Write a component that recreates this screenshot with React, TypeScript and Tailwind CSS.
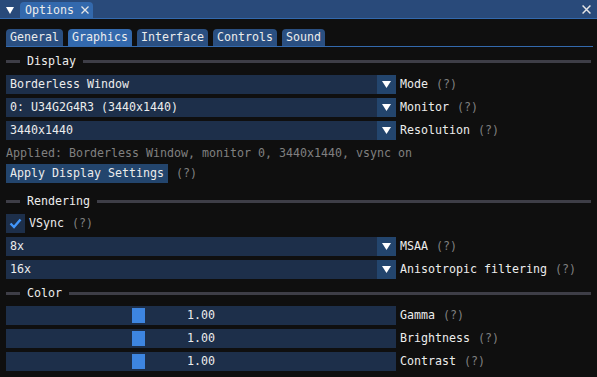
import React from 'react'

const mono = { fontFamily: '"DejaVu Sans Mono", "Liberation Mono", monospace' }

function Help() {
  return <span className="ml-[8px] text-[#808080]">(?)</span>
}

function DownTri({ w = 9, h = 7 }: { w?: number; h?: number }) {
  return (
    <svg width={w} height={h} viewBox={`0 0 ${w} ${h}`}>
      <polygon points={`0,0 ${w},0 ${w / 2},${h}`} fill="#ffffff" />
    </svg>
  )
}

function Cross({ size = 8 }: { size?: number }) {
  return (
    <svg width={size} height={size} viewBox="0 0 8 8">
      <path d="M0.5 0.5 L7.5 7.5 M7.5 0.5 L0.5 7.5" stroke="#e6e6e6" strokeWidth="1.3" />
    </svg>
  )
}

function SeparatorText({ label }: { label: string }) {
  return (
    <div className="flex h-[13px] items-center">
      <div className="h-[3px] w-[14px] bg-[#3e3e47]" />
      <span className="px-[7px] leading-[13px]">{label}</span>
      <div className="h-[3px] flex-1 bg-[#3e3e47]" />
    </div>
  )
}

function Combo({ value, label, className = '' }: { value: string; label: string; className?: string }) {
  return (
    <div className={`flex h-[19px] items-center ${className}`}>
      <div className="flex h-full w-[390px]">
        <div className="flex flex-1 items-center bg-[#1d2f4a] pl-[4px]">{value}</div>
        <div className="flex w-[19px] items-center justify-center bg-[#23456d]">
          <DownTri />
        </div>
      </div>
      <span className="ml-[4px]">{label}</span>
      <Help />
    </div>
  )
}

function Slider({ label, className = '' }: { label: string; className?: string }) {
  return (
    <div className={`flex h-[19px] items-center ${className}`}>
      <div className="flex h-full w-[390px] items-center bg-[#1d2f4a]">
        <div className="ml-[126px] h-[15px] w-[13px] bg-[#3d85e0]" />
        <span className="ml-[42px]">1.00</span>
      </div>
      <span className="ml-[4px]">{label}</span>
      <Help />
    </div>
  )
}

export default function App() {
  const tabs = ['General', 'Graphics', 'Interface', 'Controls', 'Sound']

  return (
    <div
      className="flex h-[377px] w-[597px] flex-col overflow-hidden bg-[#0f0f0f] text-[11.63px] leading-[13px] text-[#ececec]"
      style={mono}
    >
      {/* Title / dock tab bar */}
      <div className="flex h-[19px] shrink-0 items-end border-b border-[#3369ad] bg-[#294a7a]">
        <div className="mb-[3px] ml-[5px] flex h-[10px] w-[10px] items-center justify-center">
          <DownTri w={8} h={7} />
        </div>
        <div className="ml-[5px] flex h-[16px] w-[73px] items-center rounded-t-[4px] bg-[#3369ad] pl-[5px]">
          <span>Options</span>
          <span className="ml-[7px] flex items-center">
            <Cross />
          </span>
        </div>
        <div className="mb-[4px] ml-auto mr-[6px] flex items-center">
          <Cross size={9} />
        </div>
      </div>

      <div className="flex flex-col px-[6px]">
        {/* Tab bar */}
        <div className="mt-[10px] -mr-[2px] flex gap-[5px] border-b border-[#3369ad]">
          {tabs.map((t) => (
            <div
              key={t}
              className={`flex h-[17px] items-center rounded-t-[4px] px-[4px] ${
                t === 'Graphics' ? 'bg-[#3369ad]' : 'bg-[#2a4f81]'
              }`}
            >
              {t}
            </div>
          ))}
        </div>

        <div className="mt-[8px]">
          <SeparatorText label="Display" />
        </div>
        <Combo className="mt-[7px]" value="Borderless Window" label="Mode" />
        <Combo className="mt-[4px]" value="0: U34G2G4R3 (3440x1440)" label="Monitor" />
        <Combo className="mt-[4px]" value="3440x1440" label="Resolution" />

        <div className="mt-[7px] h-[13px] text-[#808080]">
          Applied: Borderless Window, monitor 0, 3440x1440, vsync on
        </div>

        <div className="mt-[4px] flex h-[19px] items-center">
          <div className="flex h-full items-center bg-[#23456d] px-[4px]">Apply Display Settings</div>
          <Help />
        </div>

        <div className="mt-[12px]">
          <SeparatorText label="Rendering" />
        </div>
        <div className="mt-[6px] flex h-[19px] items-center">
          <div className="flex h-[19px] w-[19px] items-center justify-center bg-[#1d2f4a]">
            <svg width="13" height="11" viewBox="0 0 13 11">
              <path d="M1.5 5.5 L5 9 L11.5 1.5" stroke="#4296fa" strokeWidth="2.4" fill="none" />
            </svg>
          </div>
          <span className="ml-[4px]">VSync</span>
          <Help />
        </div>
        <Combo className="mt-[4px]" value="8x" label="MSAA" />
        <Combo className="mt-[4px]" value="16x" label="Anisotropic filtering" />

        <div className="mt-[8px]">
          <SeparatorText label="Color" />
        </div>
        <Slider className="mt-[6px]" label="Gamma" />
        <Slider className="mt-[4px]" label="Brightness" />
        <Slider className="mt-[4px]" label="Contrast" />
      </div>
    </div>
  )
}
